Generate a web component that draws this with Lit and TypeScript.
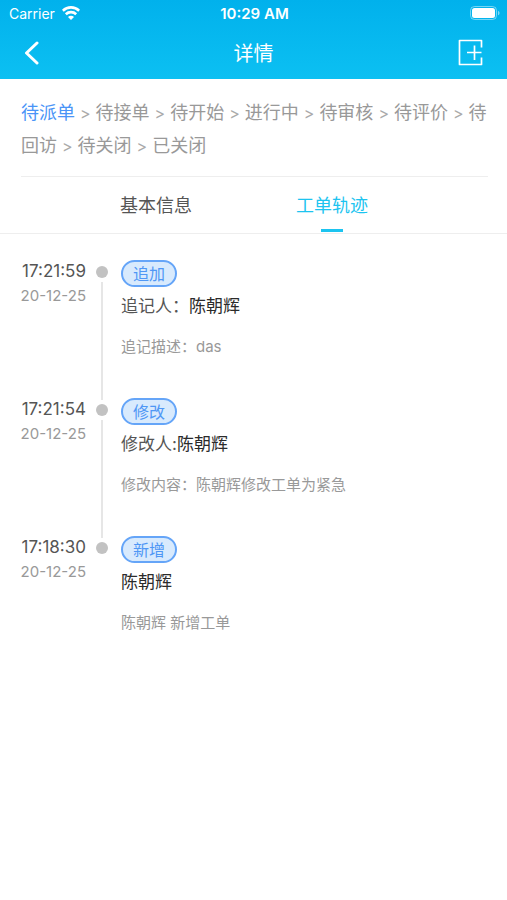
import { LitElement, html, css, nothing } from "lit";
import { customElement, property, state } from "lit/decorators.js";

interface TrackEntry {
  time: string;
  date: string;
  tag: string;
  label: string;
  person: string;
  note: string;
}

const STEPS = ["待派单", "待接单", "待开始", "进行中", "待审核", "待评价", "待回访", "待关闭", "已关闭"];
const TABS = ["基本信息", "工单轨迹"];
const ENTRIES: TrackEntry[] = [
  { time: "17:21:59", date: "20-12-25", tag: "追加", label: "追记人：", person: "陈朝辉", note: "追记描述：das" },
  { time: "17:21:54", date: "20-12-25", tag: "修改", label: "修改人:", person: "陈朝辉", note: "修改内容：陈朝辉修改工单为紧急" },
  { time: "17:18:30", date: "20-12-25", tag: "新增", label: "", person: "陈朝辉", note: "陈朝辉 新增工单" },
];

@customElement("app-header")
export class AppHeader extends LitElement {
  static styles = css`
    :host {
      display: block;
      color: #fff;
      background: linear-gradient(#01b1ec, #0cc0f2);
    }
    .status {
      display: grid;
      grid-template-columns: 1fr auto 1fr;
      align-items: center;
      height: 26px;
      padding: 0 7px 0 9px;
    }
    .carrier {
      display: flex;
      align-items: center;
      gap: 7px;
      font-size: 14px;
    }
    .clock {
      font-size: 15px;
      font-weight: 600;
    }
    .battery {
      justify-self: end;
    }
    .bar {
      display: grid;
      grid-template-columns: 1fr auto 1fr;
      align-items: center;
      height: 53px;
      padding: 0 20px;
    }
    .title {
      margin: 0;
      font-size: 20px;
      font-weight: 400;
    }
    .icon-button {
      display: flex;
      padding: 0;
      border: 0;
      background: none;
      color: inherit;
      cursor: pointer;
    }
    .add {
      justify-self: end;
    }
    svg {
      display: block;
    }
  `;

  render() {
    return html`
      <div class="status">
        <span class="carrier">
          Carrier
          <svg width="18" height="14" viewBox="0 0 18 14" fill="none" stroke="currentColor" stroke-width="2.6" aria-hidden="true">
            <path d="M0.8 4.7a11.8 11.8 0 0 1 16.4 0" />
            <path d="M3.8 8.2a7.5 7.5 0 0 1 10.4 0" />
            <path d="M9 14 6 11a4.2 4.2 0 0 1 6 0z" fill="currentColor" stroke="none" />
          </svg>
        </span>
        <span class="clock">10:29 AM</span>
        <svg class="battery" width="30" height="14" viewBox="0 0 30 14" aria-hidden="true">
          <rect x="0.5" y="0.5" width="26" height="13" rx="4" fill="none" stroke="#fff" stroke-opacity=".45" />
          <rect x="2" y="2" width="23" height="10" rx="2.5" fill="#fff" />
          <path d="M28 4.7v4.6c2-.8 2-3.8 0-4.6z" fill="#fff" fill-opacity=".5" />
        </svg>
      </div>
      <div class="bar">
        <button class="icon-button" aria-label="返回">
          <svg width="24" height="24" viewBox="0 0 24 24" fill="none" stroke="currentColor" stroke-width="3" stroke-linecap="round" stroke-linejoin="round">
            <path d="M17 2 6.500 12 17 22" />
          </svg>
        </button>
        <h1 class="title">详情</h1>
        <button class="icon-button add" aria-label="新增">
          <svg width="30" height="28" viewBox="0 0 30 28" fill="none" stroke="currentColor" stroke-width="1.7">
            <path d="M24.500 8.500V1.500H2.500v24H24.500V18.500" stroke-linejoin="round" />
            <path d="M10 13.500H24.500M17.500 6.500V21" />
          </svg>
        </button>
      </div>
    `;
  }
}

@customElement("track-item")
export class TrackItem extends LitElement {
  @property({ attribute: false }) entry!: TrackEntry;
  @property({ type: Boolean }) last = false;

  static styles = css`
    :host {
      display: grid;
      grid-template-columns: 66px 22px 1fr;
      min-height: 138px;
    }
    .when {
      display: flex;
      flex-direction: column;
      align-items: flex-end;
      white-space: nowrap;
    }
    .time {
      font-size: 17px;
      line-height: 23px;
      color: #555;
    }
    .date {
      font-size: 15px;
      line-height: 26px;
      color: #999;
    }
    .rail {
      display: flex;
      flex-direction: column;
      align-items: center;
      gap: 4px;
      padding: 6px 0 0 10px;
    }
    .dot {
      width: 12px;
      height: 12px;
      border-radius: 50%;
      background: #c2c2c2;
    }
    .line {
      flex: 1;
      width: 2px;
      margin-bottom: -2px;
      background: #e6e6e6;
    }
    .body {
      padding-left: 13px;
    }
    .tag {
      display: inline-block;
      box-sizing: border-box;
      height: 27px;
      padding: 0 10px;
      border: 2px solid #65a5f8;
      border-radius: 14px;
      background: #d8eafd;
      color: #4f97f5;
      font-size: 16px;
      line-height: 24px;
      vertical-align: top;
    }
    .who {
      margin: 6px 0 0;
      font-size: 17px;
      line-height: 26px;
      color: #555;
    }
    .person {
      color: #2b2b2b;
    }
    .note {
      margin: 16px 0 0;
      font-size: 15px;
      line-height: 24px;
      color: #999;
    }
  `;

  render() {
    const e = this.entry;
    return html`
      <div class="when">
        <span class="time">${e.time}</span>
        <span class="date">${e.date}</span>
      </div>
      <div class="rail">
        <span class="dot"></span>
        ${this.last ? nothing : html`<span class="line"></span>`}
      </div>
      <div class="body">
        <span class="tag">${e.tag}</span>
        <p class="who">${e.label}<span class="person">${e.person}</span></p>
        <p class="note">${e.note}</p>
      </div>
    `;
  }
}

@customElement("app-root")
export class AppRoot extends LitElement {
  @state() private active = 1;

  static styles = css`
    :host {
      display: block;
      min-height: 100vh;
      background: #fff;
      font-family: Inter, "Noto Sans CJK SC", sans-serif;
    }
    .steps {
      margin: 0 19px 0 21px;
      padding: 17px 0 14px;
      border-bottom: 1px solid #eee;
      font-size: 18px;
      line-height: 33px;
      color: #999;
    }
    .current {
      color: #4a94f7;
    }
    .separator {
      margin: 0 5px;
      color: #aaa;
      font-size: 16px;
      line-height: 1;
    }
    .tabs {
      display: flex;
      padding: 0 87px 0 68px;
      border-bottom: 1px solid #eee;
    }
    .tab {
      flex: 1;
      display: flex;
      flex-direction: column;
      align-items: center;
      gap: 9px;
      padding: 15px 0 1px;
      border: 0;
      background: none;
      font: inherit;
      font-size: 18px;
      line-height: 28px;
      color: #555;
      cursor: pointer;
    }
    .tab::after {
      content: "";
      width: 22px;
      height: 3px;
    }
    .tab[aria-selected="true"] {
      color: #1cc4f0;
    }
    .tab[aria-selected="true"]::after {
      background: #1cc4f0;
    }
    .track {
      padding: 26px 20px 0;
    }
  `;

  render() {
    return html`
      <app-header></app-header>
      <main>
        <div class="steps">
          ${STEPS.map((step, i) =>
            i ? html`<span class="separator">&gt;</span>${step}` : html`<span class="current">${step}</span>`
          )}
        </div>
        <div class="tabs" role="tablist">
          ${TABS.map(
            (tab, i) => html`<button
              class="tab"
              role="tab"
              aria-selected=${i === this.active ? "true" : "false"}
              @click=${() => (this.active = i)}
            >${tab}</button>`
          )}
        </div>
        <div class="track">
          ${ENTRIES.map((entry, i) => html`<track-item .entry=${entry} ?last=${i === ENTRIES.length - 1}></track-item>`)}
        </div>
      </main>
    `;
  }
}
